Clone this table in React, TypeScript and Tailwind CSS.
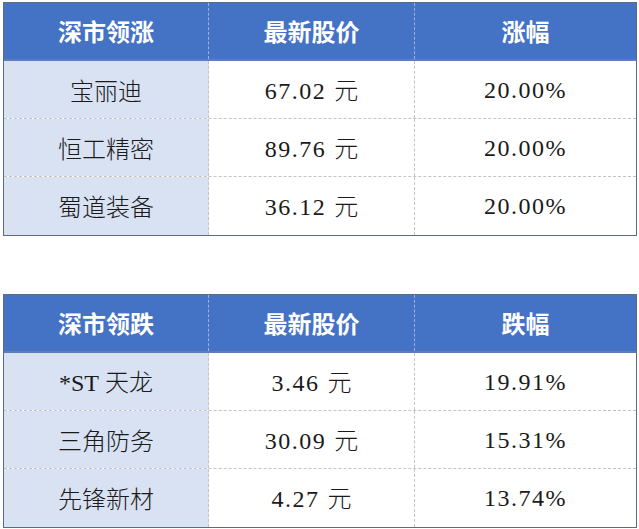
import React from "react";

const cjk = { fontFamily: '"Noto Sans CJK SC", sans-serif' };
const num = { fontFamily: '"Liberation Serif", "Noto Sans CJK SC", serif' };

type Row = { name: React.ReactNode; price: string; pct: string };

function Price({ v }: { v: string }) {
  return (
    <span className="flex items-baseline">
      <span style={num} className="tracking-[1.5px] text-[24px]">{v}</span>
      <span style={cjk} className="ml-[8px] text-[24px] font-light">元</span>
    </span>
  );
}

function Table({ title, pctTitle, rows }: { title: string; pctTitle: string; rows: Row[] }) {
  return (
    <div className="w-[634px] border border-[#5b6b80] flex flex-col">
      <div className="flex h-[58px] bg-[#4472c4] text-white border-b-2 border-b-[#5d7fb5]" style={cjk}>
        <div className="w-[205px] flex items-center justify-center text-[24px] font-bold border-r border-dashed border-r-[#9db3dd]">{title}</div>
        <div className="w-[206px] flex items-center justify-center text-[24px] font-bold border-r border-dashed border-r-[#9db3dd]">最新股价</div>
        <div className="flex-1 flex items-center justify-center text-[24px] font-bold">{pctTitle}</div>
      </div>
      {rows.map((r, i) => (
        <div key={i} className={`flex h-[58px] ${i < rows.length - 1 ? "border-b border-dashed border-b-[#c4c4c4]" : ""}`}>
          <div className="w-[205px] bg-[#d9e2f3] flex items-center justify-center text-[24px] font-light text-[#1a1a1a] border-r border-dashed border-r-[#c4c4c4]" style={cjk}>{r.name}</div>
          <div className="w-[206px] flex items-center justify-center text-[#1a1a1a] border-r border-dashed border-r-[#c4c4c4]"><Price v={r.price} /></div>
          <div className="flex-1 flex items-center justify-center text-[24px] text-[#1a1a1a] tracking-[1.5px]" style={num}>{r.pct}</div>
        </div>
      ))}
    </div>
  );
}

export default function App() {
  return (
    <div className="w-[639px] h-[529px] bg-white pl-[3px] pt-[2px] flex flex-col gap-[58px]">
      <Table
        title="深市领涨"
        pctTitle="涨幅"
        rows={[
          { name: "宝丽迪", price: "67.02", pct: "20.00%" },
          { name: "恒工精密", price: "89.76", pct: "20.00%" },
          { name: "蜀道装备", price: "36.12", pct: "20.00%" },
        ]}
      />
      <Table
        title="深市领跌"
        pctTitle="跌幅"
        rows={[
          { name: <span className="flex items-baseline"><span style={num} className="font-normal">*ST</span><span className="ml-[6px]">天龙</span></span>, price: "3.46", pct: "19.91%" },
          { name: "三角防务", price: "30.09", pct: "15.31%" },
          { name: "先锋新材", price: "4.27", pct: "13.74%" },
        ]}
      />
    </div>
  );
}
